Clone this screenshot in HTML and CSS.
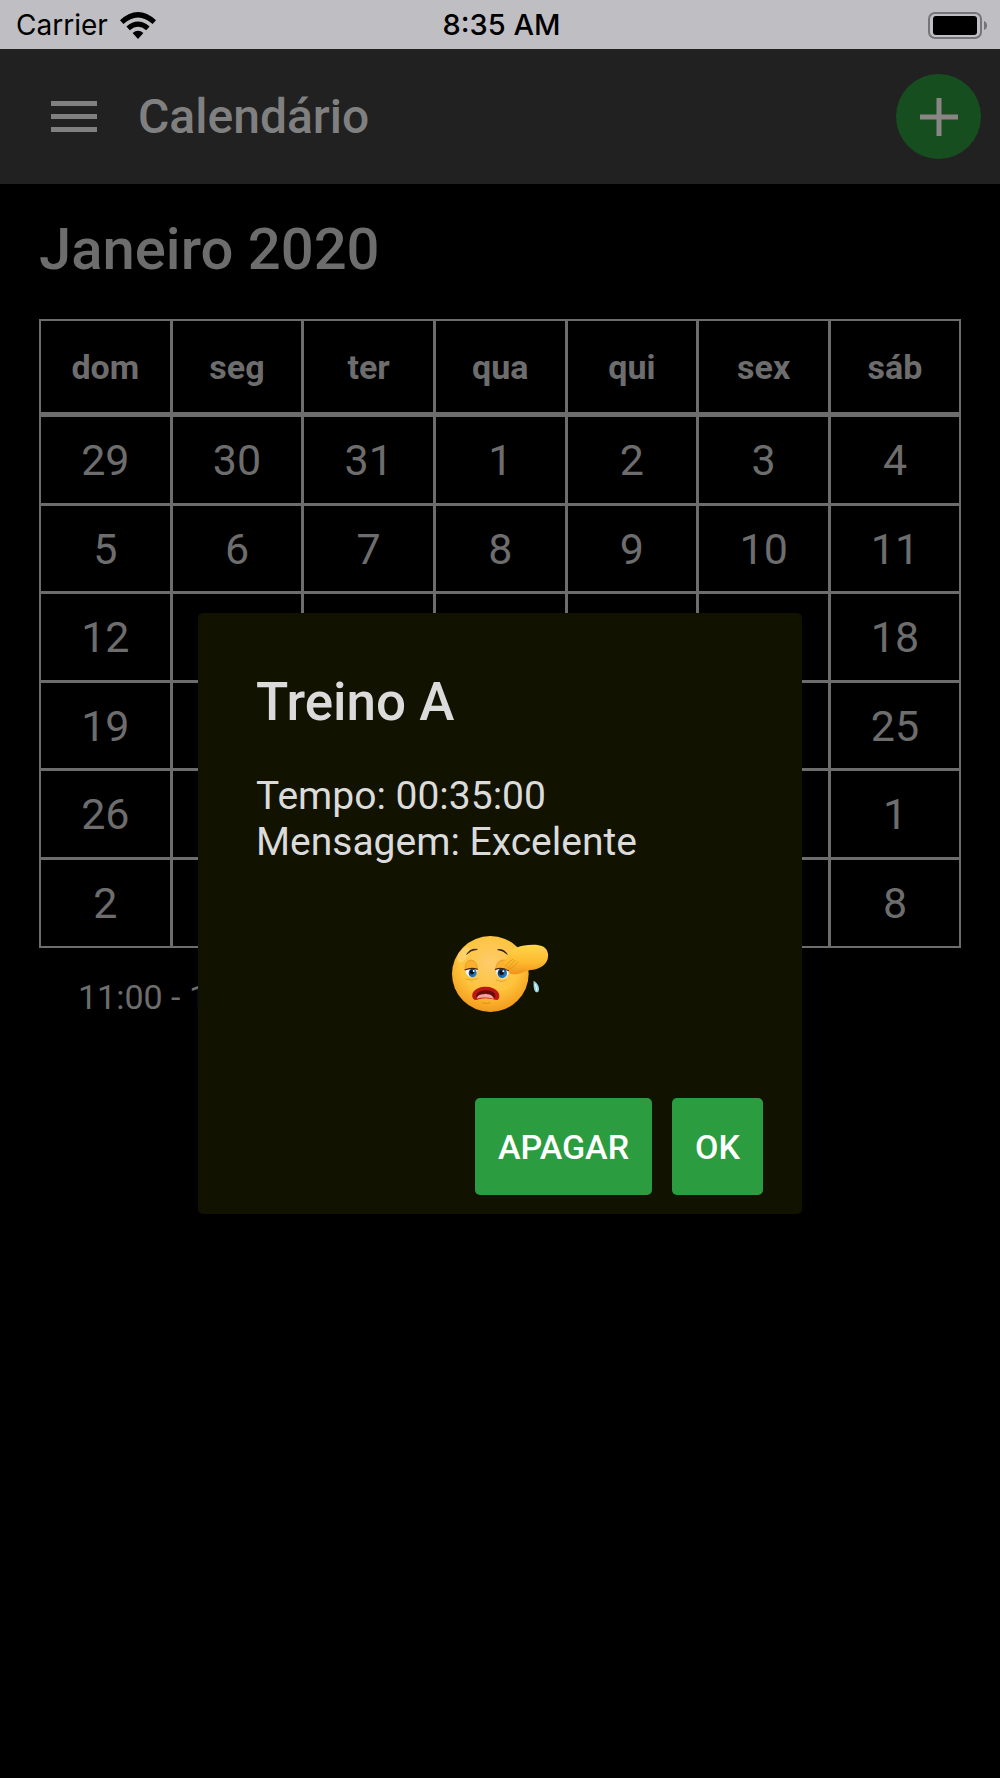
FILE: index.html
```html
<!DOCTYPE html>
<html lang="pt-BR">
<head>
  <meta charset="utf-8">
  <meta name="viewport" content="width=device-width, initial-scale=1">
  <title>Calendário</title>
  <link rel="stylesheet" href="styles.css">
</head>
<body>
  <div class="status-bar">
    <div class="status-left">
      <span>Carrier</span>
      <svg class="wifi" viewBox="0 0 36 27" aria-hidden="true">
        <path d="M0 8.200Q18-8.200 36 8.200L32.600 12Q18-1.200 3.400 12Z"/>
        <path d="M6.400 14.600Q18 4.400 29.600 14.600L26.200 18.200Q18 11.400 9.800 18.200Z"/>
        <path d="M12.600 21Q18 16.400 23.400 21L18 27Z"/>
      </svg>
    </div>
    <span class="clock">8:35 AM</span>
    <div class="status-right">
      <svg class="battery" viewBox="0 0 59 27" aria-hidden="true">
        <rect x="1" y="1" width="52" height="25" rx="6" fill="none" stroke="#757478" stroke-width="2"/>
        <rect x="5" y="4" width="44" height="19" rx="3"/>
        <path d="M56 9Q59 10 59 13.500T56 18Z" fill="#757478"/>
      </svg>
    </div>
  </div>

  <div class="app">
    <header class="toolbar">
      <button class="menu-btn" type="button" aria-label="Menu">
        <svg viewBox="0 0 46 32" aria-hidden="true">
          <path d="M0 0h46v5H0zM0 13h46v5H0zM0 26h46v5H0z"/>
        </svg>
      </button>
      <h1>Calendário</h1>
      <button class="add-btn" type="button" aria-label="Adicionar">
        <svg viewBox="0 0 38 38" aria-hidden="true">
          <path d="M16.500 0h5v16.500H38v5H21.500V38h-5V21.500H0v-5h16.500z"/>
        </svg>
      </button>
    </header>

    <main class="content">
      <h2>Janeiro 2020</h2>
      <table class="calendar">
        <thead>
          <tr><th>dom</th><th>seg</th><th>ter</th><th>qua</th><th>qui</th><th>sex</th><th>sáb</th></tr>
        </thead>
        <tbody>
          <tr><td>29</td><td>30</td><td>31</td><td>1</td><td>2</td><td>3</td><td>4</td></tr>
          <tr><td>5</td><td>6</td><td>7</td><td>8</td><td>9</td><td>10</td><td>11</td></tr>
          <tr><td>12</td><td>13</td><td>14</td><td>15</td><td>16</td><td>17</td><td>18</td></tr>
          <tr><td>19</td><td>20</td><td>21</td><td>22</td><td>23</td><td>24</td><td>25</td></tr>
          <tr><td>26</td><td>27</td><td>28</td><td>29</td><td>30</td><td>31</td><td>1</td></tr>
          <tr><td>2</td><td>3</td><td>4</td><td>5</td><td>6</td><td>7</td><td>8</td></tr>
        </tbody>
      </table>
      <p class="event">11:00 - 12:00</p>
    </main>

    <div class="overlay">
      <div class="dialog" role="dialog" aria-labelledby="dialog-title">
        <h3 id="dialog-title">Treino A</h3>
        <p>Tempo: 00:35:00<br>Mensagem: Excelente</p>
        <svg class="emoji" viewBox="60 70 300 240" role="img" aria-label="Cansado">
          <defs>
            <radialGradient id="face" cx="50%" cy="35%" r="65%">
              <stop offset="0" stop-color="#fdcb6c"/>
              <stop offset="0.600" stop-color="#fec43c"/>
              <stop offset="1" stop-color="#f39a1c"/>
            </radialGradient>
            <linearGradient id="arm" x1="0" y1="0" x2="0" y2="1">
              <stop offset="0" stop-color="#ffd64a"/>
              <stop offset="0.600" stop-color="#fdb92f"/>
              <stop offset="1" stop-color="#ef9118"/>
            </linearGradient>
            <linearGradient id="iris" x1="0" y1="0" x2="1" y2="1">
              <stop offset="0" stop-color="#0a1e44"/>
              <stop offset="1" stop-color="#2b9be8"/>
            </linearGradient>
          </defs>
          <ellipse cx="181" cy="193" rx="115" ry="114" fill="url(#face)"/>
          <ellipse cx="100" cy="135" rx="14" ry="26" fill="#ffe6a8" opacity="0.400" transform="rotate(35 100 135)"/>
          <path d="M105 180Q104 152 124 151Q142 154 142 180Z" fill="#f8b02e" stroke="#e3901c" stroke-width="2"/>
          <path d="M106 180Q124 172 142 178Q143 201 125 203Q107 200 106 180Z" fill="#f4f6fa"/>
          <ellipse cx="128" cy="190" rx="12" ry="13" fill="url(#iris)"/>
          <circle cx="126" cy="188" r="6" fill="#06101f"/>
          <circle cx="131" cy="184" r="3" fill="#fff"/>
          <path d="M104 181Q124 172 143 179" fill="none" stroke="#4c2508" stroke-width="4"/>
          <path d="M197 178Q200 149 224 151Q238 156 238 182Z" fill="#f8b02e" stroke="#e3901c" stroke-width="2"/>
          <path d="M197 179Q217 170 237 183Q235 206 216 207Q199 203 197 179Z" fill="#f4f6fa"/>
          <ellipse cx="217" cy="191" rx="14" ry="15" fill="url(#iris)"/>
          <circle cx="215" cy="189" r="7" fill="#06101f"/>
          <circle cx="220" cy="185" r="3" fill="#fff"/>
          <path d="M195 180Q215 171 238 184" fill="none" stroke="#4c2508" stroke-width="4"/>
          <path d="M110 134Q120 116 142 119Q122 121 110 134Z" fill="#15110a" stroke="#15110a" stroke-width="2"/>
          <path d="M203 120Q222 117 232 134Q220 122 203 120Z" fill="#15110a" stroke="#15110a" stroke-width="2"/>
          <path d="M106 208Q124 215 143 207M197 211Q212 220 230 212" fill="none" stroke="#e5941d" stroke-width="2"/>
          <path d="M131 269C117 249 141 231 166 231C196 230 215 251 206 268C202 273 193 270 186 268Q164 263 146 269Q136 273 131 269Z" fill="#bc160e"/>
          <path d="M139 262C137 249 152 242 168 242C187 242 198 251 196 264Q180 253 139 262Z" fill="#650c0b"/>
          <path d="M141 267C143 251 157 256 165 252C176 254 188 253 191 268Q164 260 141 267Z" fill="#f7a1a2"/>
          <path d="M157 279Q169 284 181 279" fill="none" stroke="#e28c1a" stroke-width="3"/>
          <path d="M222 171C220 145 245 113 278 108C311 103 349 101 354 132C358 165 327 180 301 181C283 184 266 198 244 193C233 190 239 181 235 178C226 183 229 174 222 171Z" fill="url(#arm)"/>
          <path d="M225 170Q235 157 250 148M236 180Q250 174 265 155M231 177Q246 162 256 151" fill="none" stroke="#dc8818" stroke-width="2"/>
          <path d="M311 213C326 222 330 237 325 246C318 251 309 246 311 213Z" fill="#9bd3e6"/>
          <path d="M315 223Q321 233 320 243" fill="none" stroke="#e9fbff" stroke-width="3"/>
        </svg>
        <div class="actions">
          <button type="button">APAGAR</button>
          <button type="button">OK</button>
        </div>
      </div>
    </div>
  </div>
</body>
</html>
```
FILE: styles.css
```css
* {
  box-sizing: border-box;
}
body {
  margin: 0;
  min-height: 100vh;
  display: flex;
  flex-direction: column;
  background-color: #000;
  color: #6d6d6d;
  font-family: Roboto, sans-serif;
}
h1, h2, h3, p {
  margin: 0;
}
button {
  border: none;
  padding: 0;
  font-family: inherit;
  cursor: pointer;
}
svg {
  display: block;
}

/* status bar */
.status-bar {
  display: grid;
  grid-template-columns: 1fr auto 1fr;
  align-items: center;
  height: 49px;
  padding: 0 13px 0 16px;
  background-color: #bfbec3;
  color: #000;
  font-family: Inter, sans-serif;
  font-size: 28px;
  line-height: 50px;
}
.status-left {
  display: flex;
  align-items: center;
  gap: 12px;
}
.clock {
  font-size: 29px;
  font-weight: 500;
}
.wifi {
  width: 36px;
  height: 27px;
}
.status-right {
  justify-self: end;
}
.battery {
  width: 59px;
  height: 27px;
}

/* app */
.app {
  position: relative;
  flex: 1;
}
.toolbar {
  display: flex;
  align-items: center;
  height: 135px;
  padding: 0 19px 0 51px;
  background-color: #212121;
  color: #808080;
}
.toolbar h1 {
  flex: 1;
  margin-left: 41px;
  font-size: 48px;
  font-weight: 500;
  line-height: 56px;
}
.menu-btn {
  background: none;
}
.menu-btn svg {
  width: 46px;
  height: 32px;
  fill: #808080;
}
.add-btn {
  display: flex;
  align-items: center;
  justify-content: center;
  width: 85px;
  height: 85px;
  border-radius: 50%;
  background-color: #164e1f;
}
.add-btn svg {
  width: 38px;
  height: 38px;
  fill: #8b8586;
}
.content {
  padding: 32px 39px;
}
.content h2 {
  font-size: 58px;
  font-weight: 500;
  line-height: 66px;
}

/* calendar */
.calendar {
  width: 100%;
  margin-top: 37px;
  table-layout: fixed;
  border: 2px solid #6d6d6d;
  border-spacing: 0;
  text-align: center;
}
.calendar th,
.calendar td {
  padding: 0;
  border-right: 3px solid #6d6d6d;
  border-bottom: 3px solid #6d6d6d;
}
.calendar th {
  height: 96px;
  border-bottom-width: 5px;
  font-size: 34px;
  font-weight: 700;
}
.calendar td {
  height: 89px;
  font-size: 43px;
}
.calendar tr:nth-child(even) td {
  height: 88px;
}
.calendar tr > :last-child {
  width: 128px;
  border-right: none;
}
.calendar tbody tr:last-child td {
  height: 86px;
  border-bottom: none;
}
.event {
  margin: 29px 0 0 39px;
  font-size: 34px;
  line-height: 40px;
}

/* dialog */
.overlay {
  position: absolute;
  inset: 0;
  display: flex;
  align-items: center;
  justify-content: center;
}
.dialog {
  width: 604px;
  max-width: 90%;
  padding: 58px 39px 19px 58px;
  border-radius: 5px;
  background-color: #121200;
  color: #dbdbdb;
}
.dialog h3 {
  font-size: 53px;
  font-weight: 500;
  line-height: 62px;
}
.dialog p {
  margin-top: 40px;
  font-size: 39px;
  line-height: 46px;
}
.emoji {
  width: 100px;
  height: 80px;
  margin: 68px auto 0;
  transform: translateX(-10px);
}
.actions {
  display: flex;
  justify-content: flex-end;
  gap: 20px;
  margin-top: 85px;
}
.actions button {
  height: 97px;
  padding: 0 23px;
  border-radius: 5px;
  background-color: #2b9c3f;
  color: #fff;
  font-size: 34px;
  font-weight: 500;
}
```
